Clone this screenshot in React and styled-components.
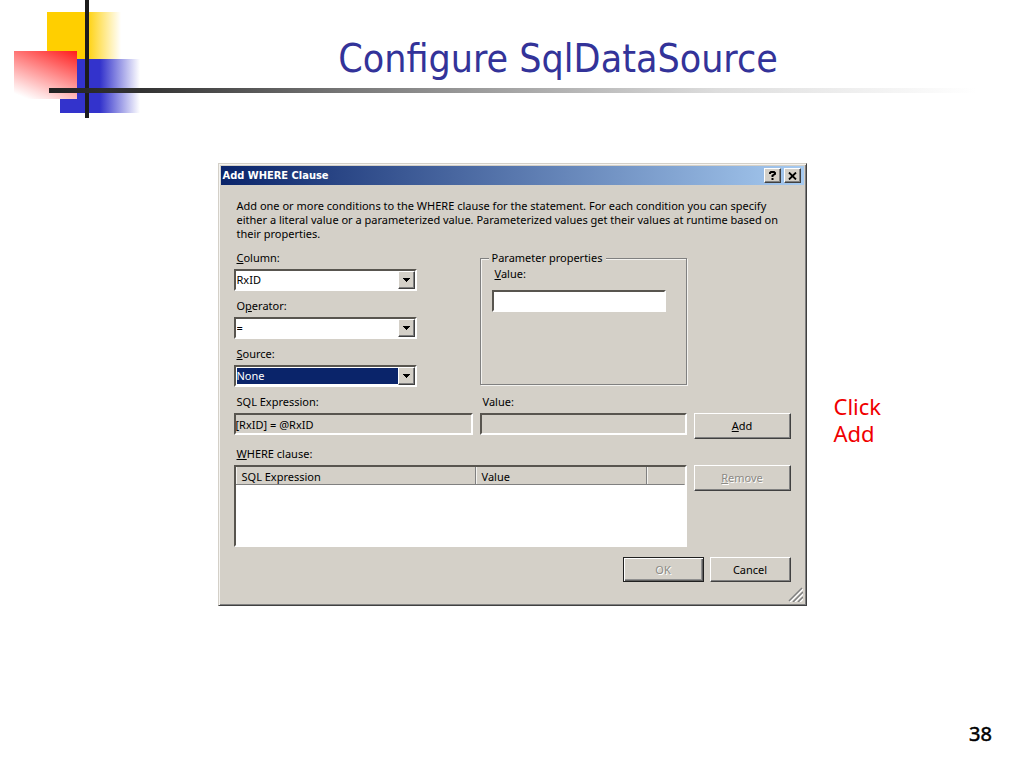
import React from "react";
import styled, { createGlobalStyle, css } from "styled-components";

const GlobalStyle = createGlobalStyle`
  *, *::before, *::after {
    box-sizing: border-box;
  }

  body {
    margin: 0;
    background: #fff;
    font-family: "Noto Sans", sans-serif;
  }
`;

// shared bevels
const sunken = css`
  border: 2px solid;
  border-color: #58554f #fff #fff #58554f;
`;

const raised = css`
  border: 1px solid;
  border-color: #fff #404040 #404040 #fff;
  box-shadow: inset -1px -1px 0 #808080;
`;

const Slide = styled.div`
  display: flex;
  flex-direction: column;
  min-height: 100vh;
`;

const Header = styled.header`
  position: relative;
  padding-top: 34px;
`;

const Ornament = styled.svg`
  position: absolute;
  top: 0;
  left: 0;
`;

const Title = styled.h1`
  margin: 0 0 4px;
  padding-left: 92px;
  font-family: "DejaVu Sans Condensed", "DejaVu Sans", sans-serif;
  font-size: 39px;
  font-weight: 400;
  line-height: 50px;
  text-align: center;
  color: #333399;
`;

const Rule = styled.div`
  position: relative;
  height: 5px;
  margin: 0 48px 0 49px;
  background: linear-gradient(to right, #222 0%, #333 10%, #777 32%, #ddd 72%, #fff);
`;

const Main = styled.main`
  flex: 1;
  display: grid;
  grid-template-columns: 1fr minmax(0, 589px) 1fr;
  align-items: start;
  padding-top: 70px;
`;

const Note = styled.p`
  width: 60px;
  margin: 230px 0 0 27px;
  font-size: 22px;
  line-height: 27px;
  color: #f00000;
`;

const Footer = styled.footer`
  padding: 0 32px 20px;
  font-size: 20px;
  line-height: 28px;
  text-align: right;
  -webkit-text-stroke: 0.5px #000;
`;

const Dialog = styled.section`
  grid-column: 2;
  padding: 2px;
  border: 1px solid;
  border-color: #d4d0c8 #404040 #404040 #d4d0c8;
  box-shadow: inset 1px 1px 0 #f4f3f0, inset -1px -1px 0 #808080;
  background: #d4d0c8;
  font-size: 11px;
  line-height: 14px;
  color: #000;
`;

const TitleBar = styled.div`
  display: flex;
  align-items: center;
  gap: 3px;
  height: 19px;
  padding: 0 3px 0 2px;
  background: linear-gradient(to right, #0a246a, #a6caf0);
`;

const TitleText = styled.h2`
  flex: 1;
  margin: 0;
  font-family: "DejaVu Sans Condensed", "DejaVu Sans", sans-serif;
  font-size: 11px;
  line-height: 14px;
  color: #fff;
`;

const TitleButton = styled.button`
  ${raised}
  display: flex;
  align-items: center;
  justify-content: center;
  width: 17px;
  height: 15px;
  padding: 0;
  background: #d4d0c8;
`;

const Body = styled.form`
  position: relative;
  padding: 14px 13px 21px;
`;

const Intro = styled.p`
  margin: 0 0 10px;
  padding: 0 3px;
`;

const FormGrid = styled.div`
  display: grid;
  grid-template-columns: minmax(0, 239fr) minmax(0, 207fr) 97px;
  gap: 8px 7px;
`;

const Stack = styled.div`
  display: flex;
  flex-direction: column;
  gap: 8px;
`;

const Field = styled.div`
  display: flex;
  flex-direction: column;
  gap: 4px;
  grid-column: ${(props) => (props.$wide ? "span 2" : "auto")};
`;

const Label = styled.label`
  padding-left: 3px;
`;

const TextBox = styled.input`
  ${sunken}
  width: 100%;
  height: 22px;
  padding: 0;
  border-radius: 0;
  background: ${(props) => (props.readOnly ? "#d4d0c8" : "#fff")};
  font: inherit;
  color: #000;
`;

const SelectBox = styled.div`
  ${sunken}
  position: relative;
  width: 183px;
  height: 22px;
`;

const Select = styled.select`
  appearance: none;
  display: block;
  width: 100%;
  height: 100%;
  padding: 0 18px 0 0;
  border: 1px solid #fff;
  border-radius: 0;
  outline: 0;
  background: ${(props) => (props.$selected ? "#0a246a" : "#fff")};
  font: inherit;
  color: ${(props) => (props.$selected ? "#fff" : "#000")};
`;

const Arrow = styled.span`
  ${raised}
  position: absolute;
  top: 0;
  right: 0;
  display: flex;
  align-items: center;
  justify-content: center;
  width: 17px;
  height: 18px;
  background: #d4d0c8;
  pointer-events: none;
`;

const GroupBox = styled.fieldset`
  min-width: 0;
  margin: 0 0 2px;
  padding: 2px 20px 0 11px;
  border: 1px solid #808080;
  box-shadow: inset 1px 1px 0 #f4f3f0, 1px 1px 0 #f4f3f0;
`;

const Legend = styled.legend`
  margin-left: -3px;
  padding: 0 4px 0 3px;
  background: #d4d0c8;
`;

const GroupField = styled(Field)`
  gap: 9px;
`;

const Button = styled.button`
  ${raised}
  width: 97px;
  height: 26px;
  padding: 0;
  background: #d4d0c8;
  font: inherit;
  color: #000;

  &:disabled {
    color: #8c8a85;
    text-shadow: 1px 1px 0 #fff;
  }
`;

const DialogButton = styled(Button)`
  width: 81px;
  height: 25px;
  ${(props) =>
    props.$default &&
    css`
      border-color: #202020;
      box-shadow: inset 1px 1px 0 #fff, inset -1px -1px 0 #606060, inset -2px -2px 0 #909090;
    `}
`;

const ListBox = styled.div`
  ${sunken}
  height: 82px;
  background: #fff;
`;

const ListTable = styled.table`
  width: 100%;
  table-layout: fixed;
  border-collapse: separate;
  border-spacing: 0;
`;

const Th = styled.th`
  width: ${(props) => props.$width || "auto"};
  height: 18px;
  padding: 2px 0 0 6px;
  border-right: 1px solid ${(props) => (props.$last ? "#d4d0c8" : "#808080")};
  border-bottom: 1px solid #808080;
  box-shadow: inset 1px 0 0 #f4f3f0;
  background: #d4d0c8;
  font-weight: 400;
  text-align: left;
`;

// lines a button up with the box beside it, below that box's label
const ButtonCell = styled.div`
  padding-top: 18px;
`;

const Actions = styled.div`
  display: flex;
  justify-content: flex-end;
  gap: 6px;
  margin-top: 10px;
`;

const Grip = styled.svg`
  position: absolute;
  right: 1px;
  bottom: 1px;
`;

const DropDown = ({ id, value, selected }) => (
  <SelectBox>
    <Select id={id} defaultValue={value} $selected={selected}>
      <option>{value}</option>
    </Select>
    <Arrow aria-hidden="true">
      <svg width="7" height="4" shapeRendering="crispEdges">
        <path d="M0 0h7L3.5 4z" />
      </svg>
    </Arrow>
  </SelectBox>
);

const Logo = () => (
  <Ornament width="150" height="120" aria-hidden="true">
    <defs>
      <linearGradient id="yellow">
        <stop offset="0.52" stopColor="#ffcf00" />
        <stop offset="1" stopColor="#fff" />
      </linearGradient>
      <linearGradient id="blue">
        <stop offset="0.5" stopColor="#3333cc" />
        <stop offset="1" stopColor="#fff" />
      </linearGradient>
      <linearGradient id="red" x1="1" y1="0" x2="0.4" y2="1.1">
        <stop offset="0" stopColor="#ff1c1c" />
        <stop offset="0.5" stopColor="#ff9090" />
        <stop offset="0.85" stopColor="#ffe0e0" />
        <stop offset="1" stopColor="#fff" />
      </linearGradient>
    </defs>
    <rect x="47" y="12" width="74" height="48" fill="url(#yellow)" />
    <rect x="60" y="59" width="80" height="54" fill="url(#blue)" />
    <rect x="14" y="51" width="63" height="48" fill="url(#red)" />
    <rect x="85" y="0" width="4" height="118" fill="#1c1c1c" />
  </Ornament>
);

export default function App() {
  return (
    <Slide>
      <GlobalStyle />
      <Header>
        <Logo />
        <Title>Configure SqlDataSource</Title>
        <Rule />
      </Header>

      <Main>
        <Dialog>
          <TitleBar>
            <TitleText>Add WHERE Clause</TitleText>
            <TitleButton type="button" aria-label="Help">
              <svg width="7" height="9" fill="none" stroke="#000" strokeWidth="2">
                <path d="M1 3V2l1-1h3l1 1v1L3.5 4.500V6M3.500 7v2" />
              </svg>
            </TitleButton>
            <TitleButton type="button" aria-label="Close">
              <svg width="9" height="8" stroke="#000" strokeWidth="1.8">
                <path d="M1 0.500l7 7M8 0.500l-7 7" />
              </svg>
            </TitleButton>
          </TitleBar>

          <Body onSubmit={(e) => e.preventDefault()}>
            <Intro>
              Add one or more conditions to the WHERE clause for the statement. For each condition you can specify
              <br />
              either a literal value or a parameterized value. Parameterized values get their values at runtime based on
              <br />
              their properties.
            </Intro>

            <FormGrid>
              <Stack>
                <Field>
                  <Label htmlFor="column"><u>C</u>olumn:</Label>
                  <DropDown id="column" value="RxID" />
                </Field>
                <Field>
                  <Label htmlFor="operator">O<u>p</u>erator:</Label>
                  <DropDown id="operator" value="=" />
                </Field>
                <Field>
                  <Label htmlFor="source"><u>S</u>ource:</Label>
                  <DropDown id="source" value="None" selected />
                </Field>
              </Stack>
              <GroupBox>
                <Legend>Parameter properties</Legend>
                <GroupField>
                  <Label htmlFor="paramValue"><u>V</u>alue:</Label>
                  <TextBox id="paramValue" type="text" />
                </GroupField>
              </GroupBox>
              <span />

              <Field>
                <Label htmlFor="expression">SQL Expression:</Label>
                <TextBox id="expression" type="text" defaultValue="[RxID] = @RxID" readOnly />
              </Field>
              <Field>
                <Label htmlFor="value">Value:</Label>
                <TextBox id="value" type="text" readOnly />
              </Field>
              <ButtonCell>
                <Button type="button"><u>A</u>dd</Button>
              </ButtonCell>

              <Field $wide>
                <Label as="span"><u>W</u>HERE clause:</Label>
                <ListBox>
                  <ListTable aria-label="WHERE clause">
                    <thead>
                      <tr>
                        <Th $width="240px">SQL Expression</Th>
                        <Th>Value</Th>
                        <Th $width="38px" $last />
                      </tr>
                    </thead>
                    <tbody />
                  </ListTable>
                </ListBox>
              </Field>
              <ButtonCell>
                <Button type="button" disabled><u>R</u>emove</Button>
              </ButtonCell>
            </FormGrid>

            <Actions>
              <DialogButton type="submit" disabled $default>OK</DialogButton>
              <DialogButton type="button">Cancel</DialogButton>
            </Actions>

            <Grip width="15" height="15" aria-hidden="true" strokeWidth="1.5">
              <path d="M2 15L15 2M7 15l8-8M12 15l3-3" stroke="#fff" />
              <path d="M1 14L14 1M5 15L15 5M10 15l5-5" stroke="#808080" />
            </Grip>
          </Body>
        </Dialog>
        <Note>Click Add</Note>
      </Main>

      <Footer>38</Footer>
    </Slide>
  );
}
